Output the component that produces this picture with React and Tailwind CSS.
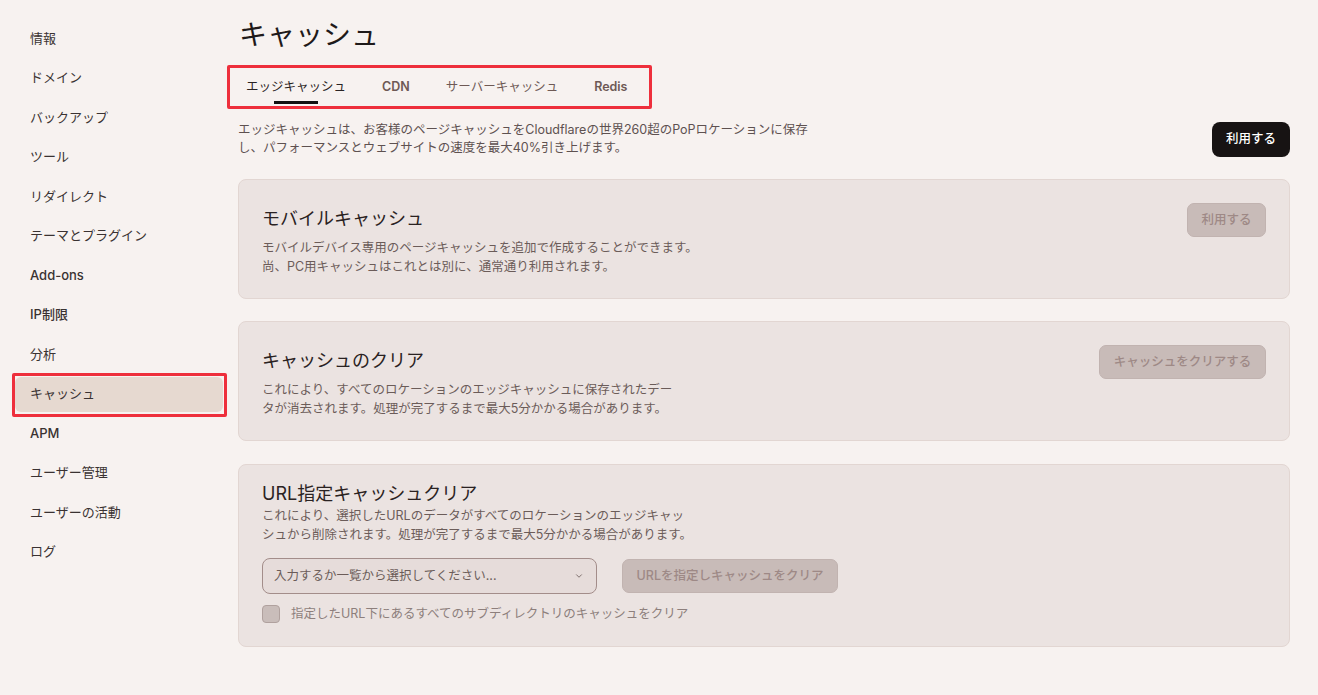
import React from "react";
import { ChevronDown } from "lucide-react";

const FONT = { fontFamily: 'Inter, "Noto Sans CJK JP", sans-serif' };

const navItems = [
  "情報",
  "ドメイン",
  "バックアップ",
  "ツール",
  "リダイレクト",
  "テーマとプラグイン",
  "Add-ons",
  "IP制限",
  "分析",
  "キャッシュ",
  "APM",
  "ユーザー管理",
  "ユーザーの活動",
  "ログ",
];

function Sidebar() {
  return (
    <div className="w-[238px] shrink-0 pl-[15px] pr-[15px] pt-[21px] flex flex-col gap-[4.5px]">
      {navItems.map((item) => {
        const active = item === "キャッシュ";
        const latin = /^[A-Za-z]/.test(item);
        return (
          <div
            key={item}
            className={`relative h-[35px] flex items-center pl-[15px] rounded-[6px] text-[13px] text-[#3a3232] ${
              active ? "bg-[#e6d9d0]" : ""
            } ${latin ? "font-medium" : "font-normal"}`}
          >
            {item}
            {active && (
              <div className="absolute -left-[3px] -right-[4px] -top-[4px] -bottom-[5px] border-[3px] border-[#ee2f3c] rounded-[2px] pointer-events-none" />
            )}
          </div>
        );
      })}
    </div>
  );
}

function Tabs() {
  const tabs = ["エッジキャッシュ", "CDN", "サーバーキャッシュ", "Redis"];
  return (
    <div className="ml-[-11px] mt-[10px] w-[425px] h-[44px] border-[3px] border-[#ee2f3c] rounded-[2px] flex items-center pl-[16px] gap-[36px]">
      {tabs.map((t, i) => {
        const latin = /^[A-Za-z]/.test(t);
        return (
          <div
            key={t}
            className={`relative h-full flex items-center text-[12.5px] ${latin ? "font-semibold" : "font-normal"} ${
              i === 0 ? "text-[#2a2323]" : "text-[#6e5955]"
            }`}
          >
            {t}
            {i === 0 && (
              <div className="absolute left-1/2 -translate-x-1/2 bottom-[2px] w-[44px] h-[3px] bg-[#111]" />
            )}
          </div>
        );
      })}
    </div>
  );
}

function DisabledButton({ children, className = "" }) {
  return (
    <div
      className={`h-[34px] px-[15px] rounded-[7px] bg-[#c8bbb8] border border-[#c1b3b0] text-[#9e8986] text-[12.5px] font-medium flex items-center justify-center whitespace-nowrap ${className}`}
    >
      {children}
    </div>
  );
}

function Card({ title, children, button }) {
  return (
    <div className="bg-[#ebe3e1] border border-[#e2d6d2] rounded-[8px] px-[23px] pt-[23px] pb-[22px] flex justify-between items-start">
      <div>
        <div className="text-[18px] leading-[28px] mt-[2px] text-[#2a2222]">{title}</div>
        <div className="mt-[5px] text-[12.5px] leading-[19px] text-[#6b5c59]">{children}</div>
      </div>
      {button}
    </div>
  );
}

export default function App() {
  return (
    <div style={FONT} className="w-[1318px] h-[695px] bg-[#f7f2f0] flex overflow-hidden">
      <Sidebar />
      <div className="flex-1 pr-[28px] pt-[15px]">
        <div className="text-[28px] leading-[40px] text-[#1f1a1a] pl-[1px]">キャッシュ</div>
        <Tabs />
        <div className="mt-[12px] flex justify-between items-center">
          <div className="text-[12.5px] leading-[18px] text-[#5e5150]">
            エッジキャッシュは、お客様のページキャッシュをCloudflareの世界260超のPoPロケーションに保存
            <br />
            し、パフォーマンスとウェブサイトの速度を最大40%引き上げます。
          </div>
          <div className="h-[35px] w-[78px] rounded-[8px] bg-[#171313] text-white text-[12.5px] font-medium flex items-center justify-center">
            利用する
          </div>
        </div>

        <div className="mt-[22px] flex flex-col gap-[22px]">
          <Card
            title="モバイルキャッシュ"
            button={<DisabledButton className="w-[79px] px-0">利用する</DisabledButton>}
          >
            モバイルデバイス専用のページキャッシュを追加で作成することができます。
            <br />
            尚、PC用キャッシュはこれとは別に、通常通り利用されます。
          </Card>
          <Card
            title="キャッシュのクリア"
            button={<DisabledButton className="w-[167px] px-0">キャッシュをクリアする</DisabledButton>}
          >
            これにより、すべてのロケーションのエッジキャッシュに保存されたデー
            <br />
            タが消去されます。処理が完了するまで最大5分かかる場合があります。
          </Card>

          <div className="mt-[1px] bg-[#ebe3e1] border border-[#e2d6d2] rounded-[8px] px-[23px] pt-[17px] pb-[22px]">
            <div className="text-[18px] leading-[24px] text-[#2a2222]">URL指定キャッシュクリア</div>
            <div className="text-[12.5px] leading-[19px] text-[#6b5c59]">
              これにより、選択したURLのデータがすべてのロケーションのエッジキャッ
              <br />
              シュから削除されます。処理が完了するまで最大5分かかる場合があります。
            </div>
            <div className="mt-[14px] flex items-center gap-[25px]">
              <div className="w-[335px] h-[36px] rounded-[8px] border border-[#a38d8a] bg-[#e6dcda] flex items-center justify-between pl-[11px] pr-[12px] text-[12.5px] text-[#6b5c59]">
                <span>入力するか一覧から選択してください...</span>
                <ChevronDown size={10} strokeWidth={2} className="text-[#6b5c59]" />
              </div>
              <DisabledButton className="w-[216px] px-0">URLを指定しキャッシュをクリア</DisabledButton>
            </div>
            <div className="mt-[11px] flex items-center gap-[11px]">
              <div className="w-[18px] h-[18px] rounded-[4px] bg-[#c9bdba] border border-[#b0a19e]" />
              <span className="text-[12.5px] text-[#8d7f7c]">指定したURL下にあるすべてのサブディレクトリのキャッシュをクリア</span>
            </div>
          </div>
        </div>
      </div>
    </div>
  );
}
